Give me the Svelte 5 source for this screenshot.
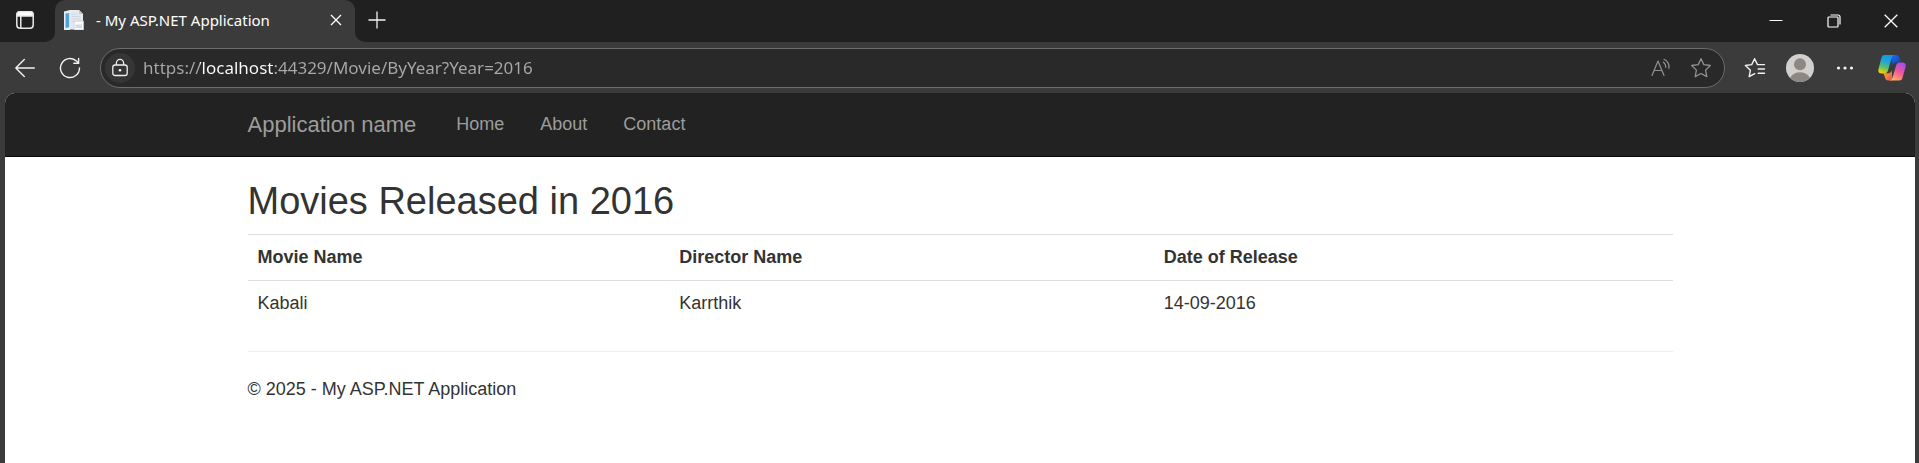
<script>
  let url = $state('https://localhost:44329/Movie/ByYear?Year=2016');
  const links = ['Home', 'About', 'Contact'];
  const movies = [{ name: 'Kabali', director: 'Karrthik', released: '14-09-2016' }];
</script>

<div class="browser">
  <header class="titlebar">
    <div class="lead">
      <button aria-label="Tab actions">
        <svg width="20" height="20" viewBox="0 0 20 20" fill="none" stroke="#e8e8e8" stroke-width="1.5">
          <rect x="1.8" y="1.8" width="16.4" height="16.4" rx="3.2" />
          <path d="M5.8 6v12" />
          <path d="M2 6V4.5A2.7 2.7 0 0 1 4.700 1.800h10.600A2.700 2.700 0 0 1 18 4.500V6z" fill="#fff" />
        </svg>
      </button>
    </div>
    <div class="tab-slot">
      <div class="tab">
        <svg width="20" height="20" viewBox="0 0 20 20">
          <path d="M0 1.500 6 0v20H0z" fill="#e9eef2" />
          <path d="M1.500 3.500 5.200 3v14.200l-3.700.8z" fill="#4fa3dc" />
          <path d="M5.500 0H15l4 4v15.500H5.500z" fill="#e6eaee" />
          <path d="M15 0v4h4z" fill="#bfc8cf" />
          <path d="M7.500 4h6M7.500 6.500h9M7.500 9h9M7.500 11.500h2" stroke="#cfd6dc" />
          <path d="M10 11h9.500v9H10z" fill="#f7f9fa" stroke="#c3cbd2" stroke-width=".8" />
          <path d="M11.500 14.500h6.500v3.500h-6.500z" fill="#d3dce3" />
        </svg>
        <span class="tab-title">- My ASP.NET Application</span>
        <button class="tab-close" aria-label="Close tab">
          <svg width="12" height="12" viewBox="0 0 12 12" stroke="#fff" stroke-width="1.3"><path d="M1 1l10 10M11 1 1 11" /></svg>
        </button>
      </div>
    </div>
    <div class="rest">
      <button class="new-tab" aria-label="New tab">
        <svg width="18" height="18" viewBox="0 0 18 18" stroke="#f2f2f2" stroke-width="1.3"><path d="M9 .5v17M.5 9h17" /></svg>
      </button>
      <div class="window-controls">
        <button aria-label="Minimize">
          <svg width="14" height="14" viewBox="0 0 14 14" stroke="#fff"><path d="M.5 6.500h13" /></svg>
        </button>
        <button aria-label="Restore">
          <svg width="14" height="14" viewBox="0 0 14 14" fill="none" stroke="#fff" stroke-width="1.200">
            <rect x="1" y="3" width="10" height="10" rx=".8" />
            <path d="M3.500 1h7.500a2 2 0 0 1 2 2v7.500" />
          </svg>
        </button>
        <button aria-label="Close">
          <svg width="14" height="14" viewBox="0 0 14 14" stroke="#fff" stroke-width="1.3"><path d="M.7.7l12.600 12.600M13.300.7.7 13.300" /></svg>
        </button>
      </div>
    </div>
  </header>

  <div class="toolbar">
    <button aria-label="Back">
      <svg width="20" height="20" viewBox="0 0 20 20" fill="none" stroke="#f2f2f2" stroke-width="1.400" stroke-linecap="round" stroke-linejoin="round"><path d="M19.300 10H.8M9.300 1.500.8 10l8.500 8.500" /></svg>
    </button>
    <button aria-label="Refresh">
      <svg width="22" height="22" viewBox="0 0 22 22" fill="none" stroke="#f2f2f2" stroke-width="1.400" stroke-linecap="round" stroke-linejoin="round">
        <path d="M20.500 11A9.500 9.500 0 1 1 17.700 4.300L19.500 6.200" />
        <path d="M19.600 1.500v4.800h-4.800" />
      </svg>
    </button>
    <div class="address">
      <button class="site" aria-label="View site information">
        <svg width="18" height="20" viewBox="0 0 18 20" fill="none" stroke="#f0f0f0" stroke-width="1.300">
          <rect x="1.800" y="7" width="14.400" height="10.500" rx="2.300" />
          <path d="M5.400 7V5a3.600 3.600 0 0 1 7.200 0v2" />
          <circle cx="9" cy="12.200" r="1.300" fill="#fff" stroke="none" />
        </svg>
      </button>
      <input type="text" aria-label="Address" spellcheck="false" bind:value={url} />
      <button class="inline" aria-label="Read aloud">
        <svg width="20" height="20" viewBox="0 0 20 20" fill="none" stroke="#919191" stroke-width="1.200" stroke-linecap="round" stroke-linejoin="round">
          <path d="M1 17.500 7 3l6 14.500M3.200 12.500h7.600" />
          <path d="M12.400 4.200a6 6 0 0 1 2.300 5.200M13 1.300a9 9 0 0 1 5 9" />
        </svg>
      </button>
      <button class="inline" aria-label="Add to favorites">
        <svg width="22" height="22" viewBox="0 0 22 22" fill="none" stroke="#919191" stroke-width="1.300" stroke-linejoin="round">
          <path d="m11 1.700 2.800 5.900 6.500.9-4.700 4.600 1.200 6.500L11 16.500l-5.800 3.100 1.200-6.500L1.700 8.500l6.500-.9z" />
        </svg>
      </button>
    </div>
    <button aria-label="Favorites">
      <svg width="22" height="22" viewBox="0 0 22 22" fill="none" stroke="#f2f2f2" stroke-width="1.400" stroke-linecap="round" stroke-linejoin="round">
        <path d="m10.700 16.700-5.500 2.900 1.200-6.400L1.400 8.500l6.300-.9 2.900-5.900 2.900 5.900h7M14.200 12h6.300M14.200 16.200h6.300" />
      </svg>
    </button>
    <button aria-label="Profile">
      <svg width="28" height="28" viewBox="0 0 28 28">
        <defs><clipPath id="face"><circle cx="14" cy="14" r="14" /></clipPath></defs>
        <g clip-path="url(#face)">
          <path d="M0 0h28v28H0z" fill="#d2d0ce" />
          <circle cx="14" cy="10.300" r="6" fill="#8c8783" />
          <ellipse cx="14" cy="26.500" rx="10.500" ry="8.300" fill="#8c8783" />
        </g>
      </svg>
    </button>
    <button aria-label="Settings and more">
      <svg width="18" height="6" viewBox="0 0 18 6" fill="#f2f2f2"><circle cx="2.500" cy="3" r="1.600" /><circle cx="9" cy="3" r="1.600" /><circle cx="15.500" cy="3" r="1.600" /></svg>
    </button>
    <button class="copilot" aria-label="Copilot">
      <svg width="28" height="28" viewBox="0 0 28 28">
        <defs>
          <linearGradient id="cool" x1=".6" y1="0" x2=".3" y2="1"><stop offset="0" stop-color="#1695e8" /><stop offset=".35" stop-color="#1ba5d8" /><stop offset=".65" stop-color="#54bc72" /><stop offset="1" stop-color="#f4d400" /></linearGradient>
          <linearGradient id="warm" x1=".8" y1="0" x2=".3" y2="1"><stop offset="0" stop-color="#a24cf0" /><stop offset=".5" stop-color="#f0569b" /><stop offset="1" stop-color="#ffb05c" /></linearGradient>
          <linearGradient id="deep" x1="0" y1="0" x2="1" y2="1"><stop offset="0" stop-color="#1e6fe8" /><stop offset="1" stop-color="#1838b8" /></linearGradient>
          <linearGradient id="fire" x1="0" y1="0" x2="1" y2="1"><stop offset="0" stop-color="#ffb52c" /><stop offset="1" stop-color="#ec4860" /></linearGradient>
        </defs>
        <path d="M13 1h5.200c1.700 0 2.700 1.200 3.200 3l1.300 4.500h-4.500c-2 0-3 1-3.600 3z" fill="url(#deep)" />
        <path d="M14.500 26.500H10c-1.700 0-2.600-1.200-3.100-3L5.500 19.300h4.600c2 0 3-1 3.600-3z" fill="url(#fire)" />
        <path d="M6.700 1h10c-1.800.3-2.600 1.500-3.200 3.500L10 16.500c-.6 2-1.900 3-3.900 3H3.500C.8 19.500-.1 17.500.5 15L3.300 4.200C3.900 2.100 4.800 1 6.700 1z" fill="url(#cool)" />
        <path d="M21.300 26.500h-9.800c1.800-.3 2.600-1.500 3.200-3.500l3.400-11.500c.6-2 1.900-3 3.900-3h2.500c2.700 0 3.600 2 3 4.500l-2.800 10.300c-.6 2.100-1.500 3.200-3.400 3.200z" fill="url(#warm)" />
      </svg>
    </button>
  </div>

  <div class="viewport">
    <nav class="navbar">
      <div class="container nav-row">
        <a class="brand" href="#/">Application name</a>
        {#each links as link}
          <a href="#/{link}">{link}</a>
        {/each}
      </div>
    </nav>
    <main class="container">
      <h2>Movies Released in 2016</h2>
      <table>
        <colgroup><col class="c-name" /><col class="c-director" /><col /></colgroup>
        <thead>
          <tr><th>Movie Name</th><th>Director Name</th><th>Date of Release</th></tr>
        </thead>
        <tbody>
          {#each movies as movie}
            <tr><td>{movie.name}</td><td>{movie.director}</td><td>{movie.released}</td></tr>
          {/each}
        </tbody>
      </table>
      <hr />
      <footer>© 2025 - My ASP.NET Application</footer>
    </main>
  </div>
</div>

<style>
  :global(body) {
    margin: 0;
    background: #3b3b3b;
  }
  .browser {
    box-sizing: border-box;
    display: flex;
    flex-direction: column;
    min-height: 100vh;
    background: #3b3b3b;
    font-family: 'Noto Sans', 'Open Sans', sans-serif;
  }
  button {
    display: flex;
    flex: none;
    align-items: center;
    justify-content: center;
    padding: 0;
    border: 0;
    background: none;
  }
  svg {
    display: block;
    flex: none;
  }

  .titlebar {
    display: flex;
    height: 42px;
  }
  .lead,
  .rest {
    display: flex;
    background: #202020;
  }
  .lead {
    width: 55px;
    border-bottom-right-radius: 10px;
  }
  .lead button {
    width: 50px;
    height: 40px;
  }
  .rest {
    flex: 1;
    justify-content: space-between;
    border-bottom-left-radius: 10px;
  }
  .tab-slot {
    width: 300px;
    background: linear-gradient(#202020 50%, #3b3b3b 50%);
  }
  .tab {
    box-sizing: border-box;
    display: flex;
    align-items: center;
    height: 42px;
    padding: 0 9px 2px;
    border-radius: 10px 10px 0 0;
    background: #3b3b3b;
  }
  .tab-title {
    flex: 1;
    padding-left: 12px;
    color: #fff;
    font-size: 15px;
    line-height: 20px;
    white-space: nowrap;
  }
  .tab-close {
    width: 20px;
    height: 20px;
  }
  .new-tab {
    width: 44px;
    height: 40px;
  }
  .window-controls {
    display: grid;
    grid-template-columns: 58px 58px 56px;
    height: 40px;
  }
  .window-controls button {
    height: 42px;
  }

  .toolbar {
    display: flex;
    align-items: center;
    height: 40px;
    padding: 6px 2px 5px;
  }
  .toolbar > button {
    width: 45px;
    height: 38px;
  }
  .toolbar > .copilot {
    width: 50px;
  }
  .address {
    box-sizing: border-box;
    display: flex;
    flex: 1;
    align-items: center;
    height: 40px;
    margin: 0 7px 0 8px;
    padding: 0 3px 0 4px;
    border: 1px solid #6c6c6c;
    border-radius: 20px;
    background: #292929;
  }
  .site {
    width: 30px;
    height: 30px;
    border-radius: 50%;
    background: #353535;
  }
  .inline {
    width: 40px;
    height: 38px;
  }
  input {
    flex: 1;
    min-width: 0;
    height: 28px;
    padding: 0 0 2px;
    margin-left: 8px;
    border: 0;
    outline: 0;
    background: linear-gradient(90deg, #a9a9a9 57px, #fff 57px 131px, #a9a9a9 131px);
    background-clip: text;
    color: transparent;
    caret-color: #fff;
    font: 17px 'Noto Sans', 'Open Sans', sans-serif;
  }

  .viewport {
    flex: 1;
    margin: 0 4px 0 5px;
    border-radius: 10px 10px 0 0;
    overflow: hidden;
    background: #fff;
    color: #333;
    font: 18px/25px 'Liberation Sans', Arial, sans-serif;
  }
  .container {
    max-width: 1425px;
    margin: 0 auto;
  }
  .navbar {
    border-bottom: 1px solid #080808;
    background: #222;
  }
  .nav-row {
    display: flex;
    align-items: center;
    gap: 36px;
    height: 63px;
  }
  .nav-row a {
    color: #9d9d9d;
    text-decoration: none;
  }
  .nav-row .brand {
    padding-right: 4px;
    font-size: 22px;
  }
  h2 {
    margin: 24px 0 12px;
    font-size: 38px;
    font-weight: 400;
    line-height: 41px;
  }
  table {
    width: 100%;
    border-collapse: separate;
    border-spacing: 0;
  }
  .c-name {
    width: 29.6%;
  }
  .c-director {
    width: 34%;
  }
  th,
  td {
    padding: 10px;
    border-top: 1px solid #ddd;
    text-align: left;
  }
  hr {
    margin: 25px 0;
    border: 0;
    border-top: 1px solid #eee;
  }
</style>
